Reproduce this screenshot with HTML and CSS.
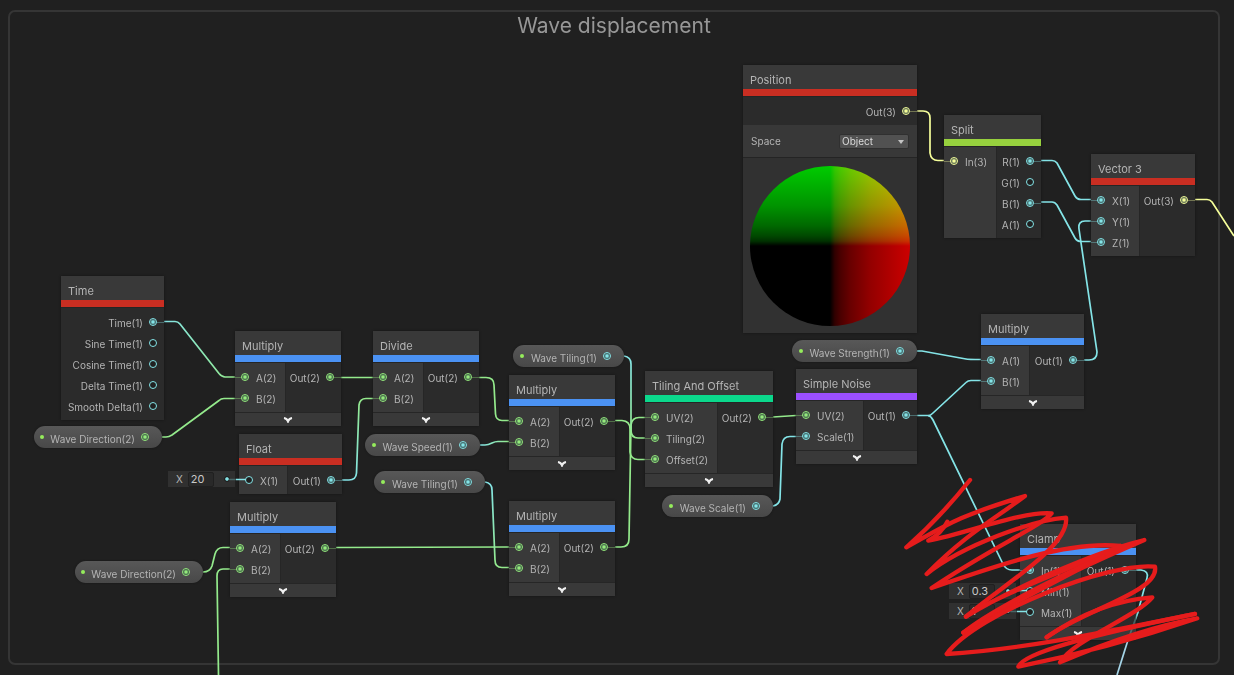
FILE: index.html
```html
<!DOCTYPE html>
<html lang="en">
<head>
<meta charset="utf-8">
<title>Wave displacement</title>
<link rel="stylesheet" href="styles.css">
</head>
<body>
<main class="canvas">
  <section class="group"><h1>Wave displacement</h1></section>

  <svg class="wires" aria-hidden="true">
    <defs>
      <linearGradient id="c2g"><stop offset="0" stop-color="#84e4e7"/><stop offset="1" stop-color="#94ea8c"/></linearGradient>
      <linearGradient id="c2gDown" x2="0" y2="1"><stop offset="0" stop-color="#84e4e7"/><stop offset="1" stop-color="#94ea8c"/></linearGradient>
      <linearGradient id="c2gUp" x2="0" y1="1" y2="0"><stop offset="0" stop-color="#84e4e7"/><stop offset="1" stop-color="#94ea8c"/></linearGradient>
    </defs>
    <g class="wire-green">
      <path d="M162 437H166Q169 437 172 435L219 400.5Q221 398.5 224 398.5H235"/>
      <path d="M341 377.5H374"/>
      <path d="M479 377.5H486Q494 377.5 494 385L495.500 414Q496 420.500 502 420.500H509"/>
      <path d="M615 420.500H622Q630 421 630 429V452Q631 459.500 638 459.500H645"/>
      <path d="M615 547H621Q629 547 629 539L631 425Q632 417.500 639 417.500H645"/>
      <path d="M336 547.500L509 547"/>
      <path d="M203 572Q210 572 212 566L215 554Q217 547.500 223 547.500H230"/>
      <path d="M218.500 675L217 576Q217 569 223 569H230"/>
      <path d="M773 417L796 415.500"/>
    </g>
    <path stroke="url(#c2g)" d="M164 321.500H175Q178 321.500 180 324L219 373.500Q222 377 225 377H235"/>
    <path stroke="url(#c2gUp)" d="M342 480H349Q356 480 356.500 473L359 405Q360 398.500 366 398.500H374"/>
    <path stroke="url(#c2g)" d="M480 445H485Q488 445 492 443Q495 441.500 498 441.500H509"/>
    <path stroke="url(#c2gDown)" d="M624 356Q631 357 631 364V430Q631 438 638 438H645"/>
    <path stroke="url(#c2gDown)" d="M485 482Q492 483 492 490L495 560Q495 567.500 502 567.500H509"/>
    <g class="wire-cyan">
      <path d="M773 506Q779 505 780 499L782 444Q783 436.500 790 436.500H796"/>
      <path d="M917 351H922L966 359Q968 359.500 981 359.500"/>
      <path d="M917 415.500H928Q930 416 933 413L966 382.500Q968 380.500 971 380.500H981"/>
      <path d="M928 415.500Q931 416 933 420L1003 564Q1006 570 1012 570H1020"/>
      <path d="M1084 360H1089Q1097 360 1097 352L1079 229Q1078 221 1085 221H1091"/>
      <path d="M1041 160.500H1052Q1055 160.500 1057 163L1075 196Q1077 199.500 1081 199.500H1091"/>
      <path d="M1041 202H1052Q1055 202 1057 205L1075 238Q1077 241.500 1081 241.500H1091"/>
      <path d="M1136 570H1141Q1149 571 1147 578L1138 612L1128 640"/>
      <path class="wire-pale" d="M1128 640L1117 675"/>
    </g>
    <g class="wire-yellow">
      <path d="M917 111H923Q930 111 930 118V153Q931 160.500 938 160.500H944"/>
      <path d="M1195 199.500H1207Q1210 199.500 1212 202L1234 236"/>
    </g>
  </svg>

  <article class="node time">
    <h2 class="red">Time</h2>
    <div class="body"><ul class="out cyan">
      <li><span>Time(1)</span><i class="port on"></i></li>
      <li><span>Sine Time(1)</span><i class="port"></i></li>
      <li><span>Cosine Time(1)</span><i class="port"></i></li>
      <li><span>Delta Time(1)</span><i class="port"></i></li>
      <li><span>Smooth Delta(1)</span><i class="port"></i></li>
    </ul></div>
  </article>

  <article class="node multiply-a">
    <h2 class="blue">Multiply</h2>
    <div class="body">
      <ul class="in green"><li><i class="port on"></i><span>A(2)</span></li><li><i class="port on"></i><span>B(2)</span></li></ul>
      <ul class="out green"><li><span>Out(2)</span><i class="port on"></i></li></ul>
    </div>
    <button class="fold" aria-label="Collapse"><svg viewBox="0 0 10 6"><path d="M1 1Q4 1.500 5 4.500Q6 1.500 9 1"/></svg></button>
  </article>

  <article class="node divide">
    <h2 class="blue">Divide</h2>
    <div class="body">
      <ul class="in green"><li><i class="port on"></i><span>A(2)</span></li><li><i class="port on"></i><span>B(2)</span></li></ul>
      <ul class="out green"><li><span>Out(2)</span><i class="port on"></i></li></ul>
    </div>
    <button class="fold" aria-label="Collapse"><svg viewBox="0 0 10 6"><path d="M1 1Q4 1.500 5 4.500Q6 1.500 9 1"/></svg></button>
  </article>

  <article class="node multiply-b">
    <h2 class="blue">Multiply</h2>
    <div class="body">
      <ul class="in green"><li><i class="port on"></i><span>A(2)</span></li><li><i class="port on"></i><span>B(2)</span></li></ul>
      <ul class="out green"><li><span>Out(2)</span><i class="port on"></i></li></ul>
    </div>
    <button class="fold" aria-label="Collapse"><svg viewBox="0 0 10 6"><path d="M1 1Q4 1.500 5 4.500Q6 1.500 9 1"/></svg></button>
  </article>

  <article class="node multiply-c">
    <h2 class="blue">Multiply</h2>
    <div class="body">
      <ul class="in green"><li><i class="port on"></i><span>A(2)</span></li><li><i class="port on"></i><span>B(2)</span></li></ul>
      <ul class="out green"><li><span>Out(2)</span><i class="port on"></i></li></ul>
    </div>
    <button class="fold" aria-label="Collapse"><svg viewBox="0 0 10 6"><path d="M1 1Q4 1.500 5 4.500Q6 1.500 9 1"/></svg></button>
  </article>

  <article class="node multiply-d">
    <h2 class="blue">Multiply</h2>
    <div class="body">
      <ul class="in green"><li><i class="port on"></i><span>A(2)</span></li><li><i class="port on"></i><span>B(2)</span></li></ul>
      <ul class="out green"><li><span>Out(2)</span><i class="port on"></i></li></ul>
    </div>
    <button class="fold" aria-label="Collapse"><svg viewBox="0 0 10 6"><path d="M1 1Q4 1.500 5 4.500Q6 1.500 9 1"/></svg></button>
  </article>

  <article class="node float">
    <h2 class="red">Float</h2>
    <div class="body">
      <ul class="in cyan"><li><i class="port"></i><span>X(1)</span></li></ul>
      <ul class="out cyan"><li><span>Out(1)</span><i class="port on"></i></li></ul>
    </div>
  </article>

  <article class="node tiling-offset">
    <h2 class="teal">Tiling And Offset</h2>
    <div class="body">
      <ul class="in green"><li><i class="port on"></i><span>UV(2)</span></li><li><i class="port on"></i><span>Tiling(2)</span></li><li><i class="port on"></i><span>Offset(2)</span></li></ul>
      <ul class="out green"><li><span>Out(2)</span><i class="port on"></i></li></ul>
    </div>
    <button class="fold" aria-label="Collapse"><svg viewBox="0 0 10 6"><path d="M1 1Q4 1.500 5 4.500Q6 1.500 9 1"/></svg></button>
  </article>

  <article class="node noise">
    <h2 class="purple">Simple Noise</h2>
    <div class="body">
      <ul class="in cyan"><li class="green"><i class="port on"></i><span>UV(2)</span></li><li><i class="port on"></i><span>Scale(1)</span></li></ul>
      <ul class="out cyan"><li><span>Out(1)</span><i class="port on"></i></li></ul>
    </div>
    <button class="fold" aria-label="Collapse"><svg viewBox="0 0 10 6"><path d="M1 1Q4 1.500 5 4.500Q6 1.500 9 1"/></svg></button>
  </article>

  <article class="node position">
    <h2 class="red">Position</h2>
    <div class="body"><ul class="out yellow"><li><span>Out(3)</span><i class="port on"></i></li></ul></div>
    <div class="setting">
      <label for="space">Space</label>
      <span class="dropdown"><select id="space"><option>Object</option><option>View</option><option>World</option></select></span>
    </div>
    <div class="preview">
      <svg viewBox="0 0 160 160" role="img" aria-label="Position preview">
        <defs>
          <linearGradient id="sphereR"><stop offset="0" stop-color="#000"/><stop offset=".06" stop-color="#300000"/><stop offset=".125" stop-color="#480000"/><stop offset=".25" stop-color="#680000"/><stop offset=".5" stop-color="#930000"/><stop offset="1" stop-color="#cc0000"/></linearGradient>
          <linearGradient id="sphereG" x2="0" y1="1" y2="0"><stop offset="0" stop-color="#000"/><stop offset=".06" stop-color="#003000"/><stop offset=".125" stop-color="#004800"/><stop offset=".25" stop-color="#006800"/><stop offset=".5" stop-color="#009300"/><stop offset="1" stop-color="#00cc00"/></linearGradient>
          <clipPath id="ball"><circle cx="80" cy="80" r="80"/></clipPath>
        </defs>
        <g clip-path="url(#ball)" class="ball">
          <rect width="160" height="160"/>
          <rect x="80" width="80" height="160" fill="url(#sphereR)"/>
          <rect width="160" height="80" fill="url(#sphereG)"/>
        </g>
      </svg>
    </div>
  </article>

  <article class="node split">
    <h2 class="lime">Split</h2>
    <div class="body">
      <ul class="in yellow"><li><i class="port on"></i><span>In(3)</span></li></ul>
      <ul class="out cyan">
        <li><span>R(1)</span><i class="port on"></i></li>
        <li><span>G(1)</span><i class="port"></i></li>
        <li><span>B(1)</span><i class="port on"></i></li>
        <li><span>A(1)</span><i class="port"></i></li>
      </ul>
    </div>
  </article>

  <article class="node vector">
    <h2 class="red">Vector 3</h2>
    <div class="body">
      <ul class="in cyan"><li><i class="port on"></i><span>X(1)</span></li><li><i class="port on"></i><span>Y(1)</span></li><li><i class="port on"></i><span>Z(1)</span></li></ul>
      <ul class="out yellow"><li><span>Out(3)</span><i class="port on"></i></li></ul>
    </div>
  </article>

  <article class="node multiply-e">
    <h2 class="blue">Multiply</h2>
    <div class="body">
      <ul class="in cyan"><li><i class="port on"></i><span>A(1)</span></li><li><i class="port on"></i><span>B(1)</span></li></ul>
      <ul class="out cyan"><li><span>Out(1)</span><i class="port on"></i></li></ul>
    </div>
    <button class="fold" aria-label="Collapse"><svg viewBox="0 0 10 6"><path d="M1 1Q4 1.500 5 4.500Q6 1.500 9 1"/></svg></button>
  </article>

  <article class="node clamp">
    <h2 class="blue">Clamp</h2>
    <div class="body">
      <ul class="in cyan"><li><i class="port on"></i><span>In(1)</span></li><li><i class="port"></i><span>Min(1)</span></li><li><i class="port"></i><span>Max(1)</span></li></ul>
      <ul class="out cyan"><li><span>Out(1)</span><i class="port on"></i></li></ul>
    </div>
    <button class="fold" aria-label="Collapse"><svg viewBox="0 0 10 6"><path d="M1 1Q4 1.500 5 4.500Q6 1.500 9 1"/></svg></button>
  </article>

  <div class="pill direction-a green"><span>Wave Direction(2)</span><i class="port on"></i></div>
  <div class="pill direction-b green"><span>Wave Direction(2)</span><i class="port on"></i></div>
  <div class="pill speed cyan"><span>Wave Speed(1)</span><i class="port on"></i></div>
  <div class="pill tiling-a cyan"><span>Wave Tiling(1)</span><i class="port on"></i></div>
  <div class="pill tiling-b cyan"><span>Wave Tiling(1)</span><i class="port on"></i></div>
  <div class="pill scale cyan"><span>Wave Scale(1)</span><i class="port on"></i></div>
  <div class="pill strength cyan"><span>Wave Strength(1)</span><i class="port on"></i></div>

  <div class="value value-float"><label for="v-float">X</label><input id="v-float" value="20"></div>
  <div class="value value-min"><label for="v-min">X</label><input id="v-min" value="0.3"></div>
  <div class="value value-max"><label for="v-max">X</label><input id="v-max" value="1"></div>

  <svg class="wires links" aria-hidden="true">
    <g class="wire-cyan">
      <path d="M236 479.500H246M1017 590.500H1027M1017 611.500H1027"/>
      <path opacity=".3" d="M229 479.500H236M1010 590.500H1017M1010 611.500H1017M1138 612L1128 640"/>
    </g>
    <g class="scribble" transform="translate(890 470) scale(.3333)">
      <path d="M240 30Q150 143 49 232C170 165 200 140 405 78C310 150 230 190 110 312C220 225 430 150 528 143C540 230 330 350 228 440"/>
      <path d="M172 155Q155 190 115 212C230 190 400 122 485 130C460 165 300 235 125 354C270 305 520 210 690 228"/>
      <path d="M690 228C560 290 330 370 228 440C360 360 600 250 763 210C600 280 380 380 220 488C400 375 580 300 690 228"/>
      <path d="M640 260C480 330 290 430 220 488"/>
      <path d="M470 502C580 420 810 365 795 290C660 275 260 430 170 552C400 540 700 475 915 432"/>
      <path d="M470 502C580 425 680 390 787 382C740 440 550 510 510 577C620 530 780 470 922 445C760 500 560 555 385 590C400 550 580 500 915 432"/>
    </g>
  </svg>
</main>
</body>
</html>
```
FILE: styles.css
```css
* { box-sizing: border-box; }

body {
  margin: 0;
  background: #202020;
  color: #b4b4b4;
  font: 10px/14px Inter, "Liberation Sans", sans-serif;
  font-variation-settings: "opsz" 32;
}

.canvas {
  position: relative;
  display: flex;
  min-height: 100vh;
  padding: 10px 14px 10px 8px;
  overflow: hidden;
}

.group {
  flex: 1;
  border: 2px solid #353535;
  border-radius: 7px;
}

.group h1 {
  margin: 0;
  color: #979797;
  font-size: 21px;
  font-weight: 400;
  font-variation-settings: normal;
  line-height: 28px;
  text-align: center;
}

.wires {
  position: absolute;
  inset: 0;
  width: 100%;
  height: 100%;
  overflow: visible;
  fill: none;
  stroke-width: 1.7;
}

.links { pointer-events: none; }
.wire-green { stroke: #94ea8c; }
.wire-cyan { stroke: #84e4e7; }
.wire-pale { stroke: #a5d5e8; }
.wire-yellow { stroke: #f6ff9a; }

.scribble {
  stroke: #e61c1c;
  stroke-width: 13;
  stroke-linecap: round;
  stroke-linejoin: round;
}

.green { color: #94ea7c; }
.cyan { color: #84e4e7; }
.yellow { color: #f6ff9a; }

/* Nodes */
.node {
  position: absolute;
  background: #2b2b2b;
  box-shadow: 0 0 2px #151515;
}

.node h2 {
  margin: 0;
  padding: 7px 7px 0;
  height: 31px;
  background: #393939;
  border-bottom: 7px solid;
  font-size: 11px;
  font-weight: 400;
  line-height: 17px;
  white-space: nowrap;
}

.node .red { border-color: #c92e22; }
.node .blue { border-color: #4b92f3; }
.node .teal { border-color: #0bd88c; }
.node .purple { border-color: #9b4fff; }
.node .lime { border-color: #97d13e; }

.body {
  display: flex;
  border-top: 1px solid #252525;
}

.body ul {
  margin: 0;
  padding: 3px 6px 4px;
  list-style: none;
}

.body .in {
  padding-right: 9px;
  background: #393939;
  border-right: 1px solid #262626;
}

.body .out {
  flex: 1;
  padding-left: 0;
}

.body li {
  display: flex;
  align-items: center;
  gap: 6px;
  height: 21px;
}

.out li { justify-content: flex-end; }

.body span,
.pill span {
  padding-top: 3px;
  color: #b4b4b4;
  white-space: nowrap;
}

.port {
  position: relative;
  flex: none;
  width: 8px;
  height: 8px;
  margin-right: 1px;
  border: 1px solid;
  border-radius: 50%;
  background: #202020;
}

.port.on { background: radial-gradient(circle, currentColor 1px, #2c3c3c 3px); }

.body .port.on::after {
  content: "";
  position: absolute;
  top: 3px;
  left: 7px;
  width: 7px;
  height: 1px;
  background: currentColor;
  opacity: .35;
}

.body .in .port.on::after { left: -7px; }

.fold {
  display: flex;
  align-items: center;
  justify-content: center;
  width: 100%;
  height: 14px;
  padding: 0;
  border: 0;
  border-top: 1px solid #262626;
  background: #393939;
}

.fold svg {
  width: 10px;
  height: 6px;
  fill: none;
  stroke: #f0f0f0;
  stroke-width: 2;
}

.time { left: 61px; top: 276px; width: 103px; }
.multiply-a { left: 235px; top: 331px; width: 106px; }
.divide { left: 373px; top: 331px; width: 106px; }
.multiply-b { left: 509px; top: 375px; width: 106px; }
.multiply-c { left: 230px; top: 502px; width: 106px; }
.multiply-d { left: 509px; top: 501px; width: 106px; }
.float { left: 239px; top: 434px; width: 103px; }
.tiling-offset { left: 645px; top: 371px; width: 128px; }
.noise { left: 796px; top: 369px; width: 121px; }
.position { left: 743px; top: 65px; width: 174px; }
.split { left: 944px; top: 115px; width: 97px; }
.vector { left: 1091px; top: 154px; width: 104px; }
.multiply-e { left: 981px; top: 314px; width: 103px; }
.clamp { left: 1020px; top: 524px; width: 116px; }

/* Position node extras */
.setting {
  display: flex;
  align-items: center;
  justify-content: space-between;
  height: 33px;
  padding: 0 8px;
  background: #383838;
  border-bottom: 1px solid #242424;
}

.dropdown {
  position: relative;
  width: 70px;
}

.dropdown::after {
  content: "";
  position: absolute;
  top: 6px;
  right: 5px;
  border: 3px solid transparent;
  border-top: 4px solid #c4c4c4;
  border-bottom: 0;
}

.dropdown select {
  display: block;
  width: 100%;
  height: 15px;
  padding: 0 2px;
  appearance: none;
  border: 1px solid #303030;
  border-radius: 2px;
  background: #515151;
  color: #dadada;
  font: inherit;
  line-height: 13px;
}

.preview {
  padding: 8px 7px 7px;
  background: #313131;
}

.preview svg { display: block; width: 100%; }
.ball { isolation: isolate; }
.ball rect { mix-blend-mode: screen; }

/* Property pills */
.pill {
  position: absolute;
  display: flex;
  align-items: center;
  justify-content: flex-end;
  gap: 6px;
  height: 22px;
  padding-right: 12px;
  border-radius: 11px;
  background: linear-gradient(#585858, #484848);
  box-shadow: 0 0 2px #151515;
}

.pill::before {
  content: "";
  flex: none;
  width: 4px;
  height: 4px;
  margin: 0 auto 0 7px;
  border-radius: 50%;
  background: #95ec5c;
}

.direction-a { left: 34px; top: 426px; width: 128px; }
.direction-b { left: 75px; top: 561px; width: 128px; }
.speed { left: 365px; top: 434px; width: 115px; }
.tiling-a { left: 513px; top: 345px; width: 111px; }
.tiling-b { left: 374px; top: 471px; width: 111px; }
.scale { left: 662px; top: 495px; width: 111px; }
.strength { left: 792px; top: 340px; width: 125px; }

/* Inline value editors */
.value {
  position: absolute;
  display: flex;
  align-items: center;
  gap: 5px;
  width: 67px;
  height: 16px;
  padding-left: 8px;
  background: #303030;
}

.value::after {
  content: "";
  flex: none;
  width: 4px;
  height: 4px;
  margin: 0 6px 0 auto;
  border-radius: 50%;
  background: #84e4e7;
  outline: 1px solid #1d1d1d;
}

.value input {
  width: 26px;
  height: 15px;
  padding: 0 2px;
  border: 1px solid #202020;
  border-radius: 2px;
  background: #292929;
  color: #c8c8c8;
  font: inherit;
  font-size: 11px;
}

.value-float { left: 168px; top: 471px; }
.value-min { left: 949px; top: 583px; }
.value-max { left: 949px; top: 603px; }
```
